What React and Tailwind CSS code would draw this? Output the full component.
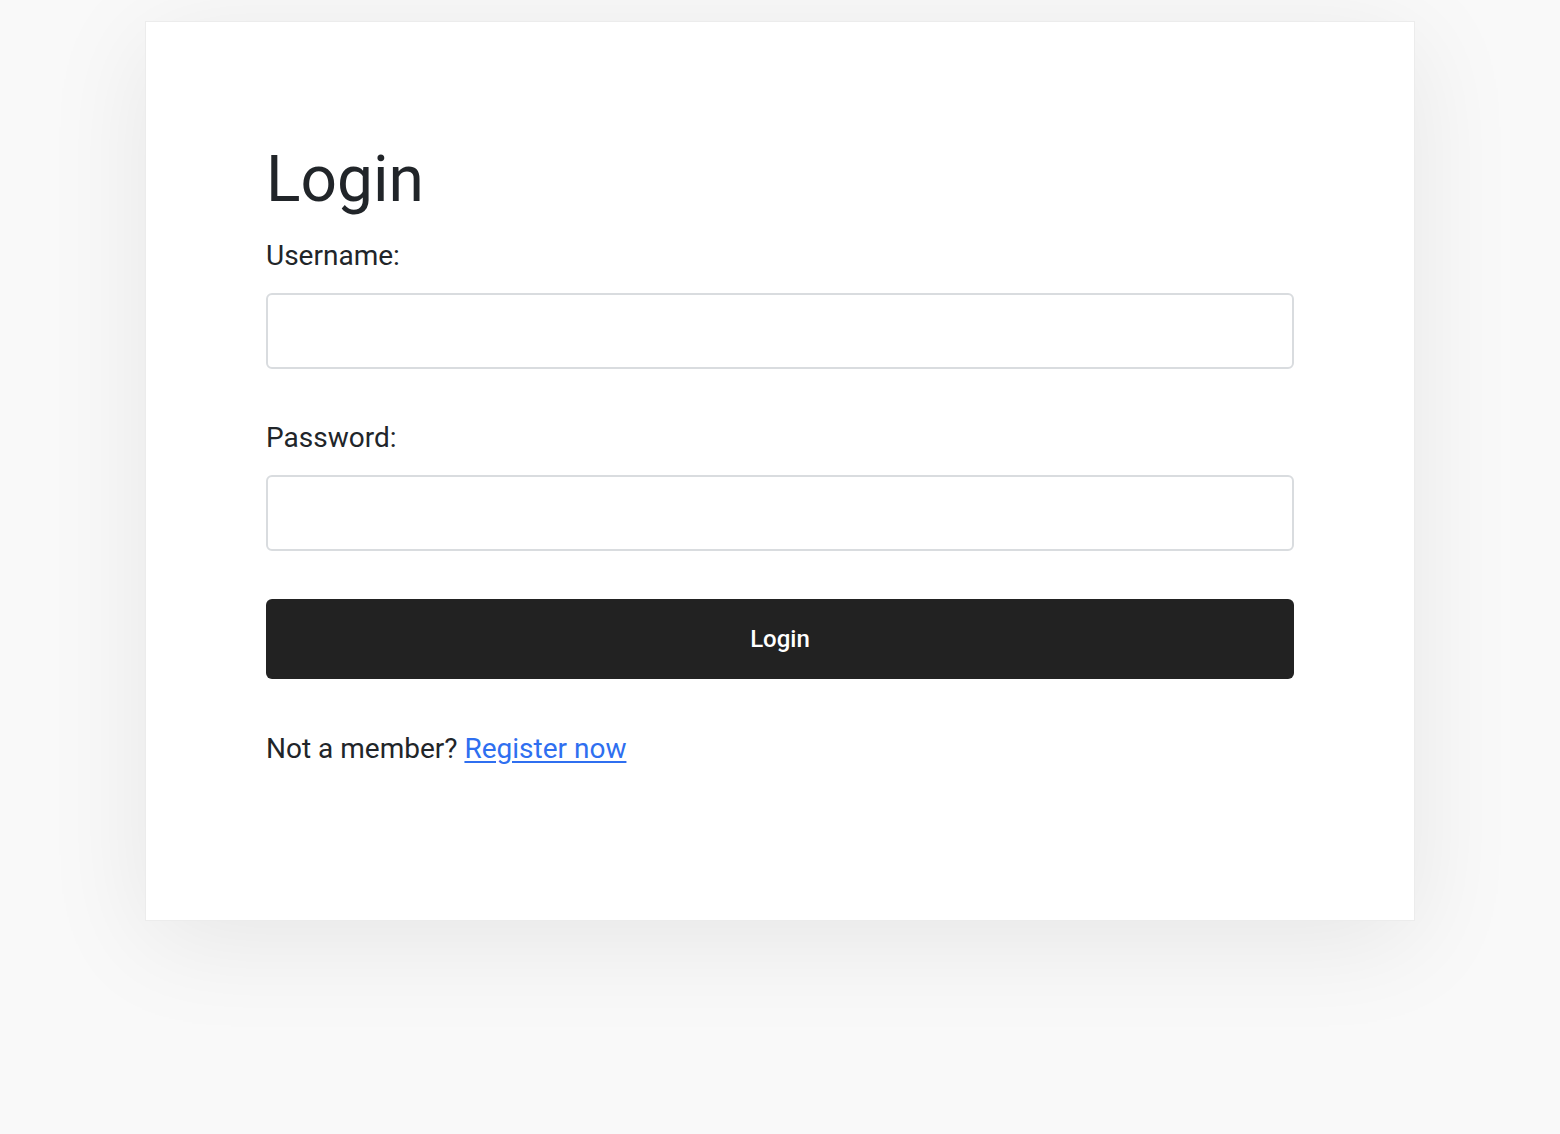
import React from 'react';

export default function App() {
  return (
    <div className="min-h-screen bg-[#f9f9f9] pt-[21px] font-['Roboto',sans-serif] text-[#212529]">
      <div className="mx-auto w-[1270px] border border-[#ececec] bg-white px-[120px] pt-[120px] pb-[150px] shadow-[0_20px_100px_rgba(0,0,0,0.08)]">
        <h1 className="text-[64px] leading-[1.2] font-normal">Login</h1>

        <form onSubmit={(e) => e.preventDefault()}>
          <label htmlFor="username" className="mt-[16px] block text-[28px] leading-[42px]">
            Username:
          </label>
          <input
            id="username"
            type="text"
            className="mt-[16px] block h-[76px] w-full rounded-[6px] border-2 border-[#d9dcdf] px-4 text-[24px] outline-none"
          />

          <label htmlFor="password" className="mt-[48px] block text-[28px] leading-[42px]">
            Password:
          </label>
          <input
            id="password"
            type="password"
            className="mt-[16px] block h-[76px] w-full rounded-[6px] border-2 border-[#d9dcdf] px-4 text-[24px] outline-none"
          />

          <button
            type="submit"
            className="mt-[48px] flex h-[80px] w-full items-center justify-center rounded-[6px] bg-[#222222] text-[24px] font-medium text-white"
          >
            Login
          </button>
        </form>

        <p className="mt-[49px] text-[28px] leading-[42px]">
          Not a member?{' '}
          <a href="#" className="text-[#2f6ff0] underline underline-offset-[3px]">
            Register now
          </a>
        </p>
      </div>
    </div>
  );
}
